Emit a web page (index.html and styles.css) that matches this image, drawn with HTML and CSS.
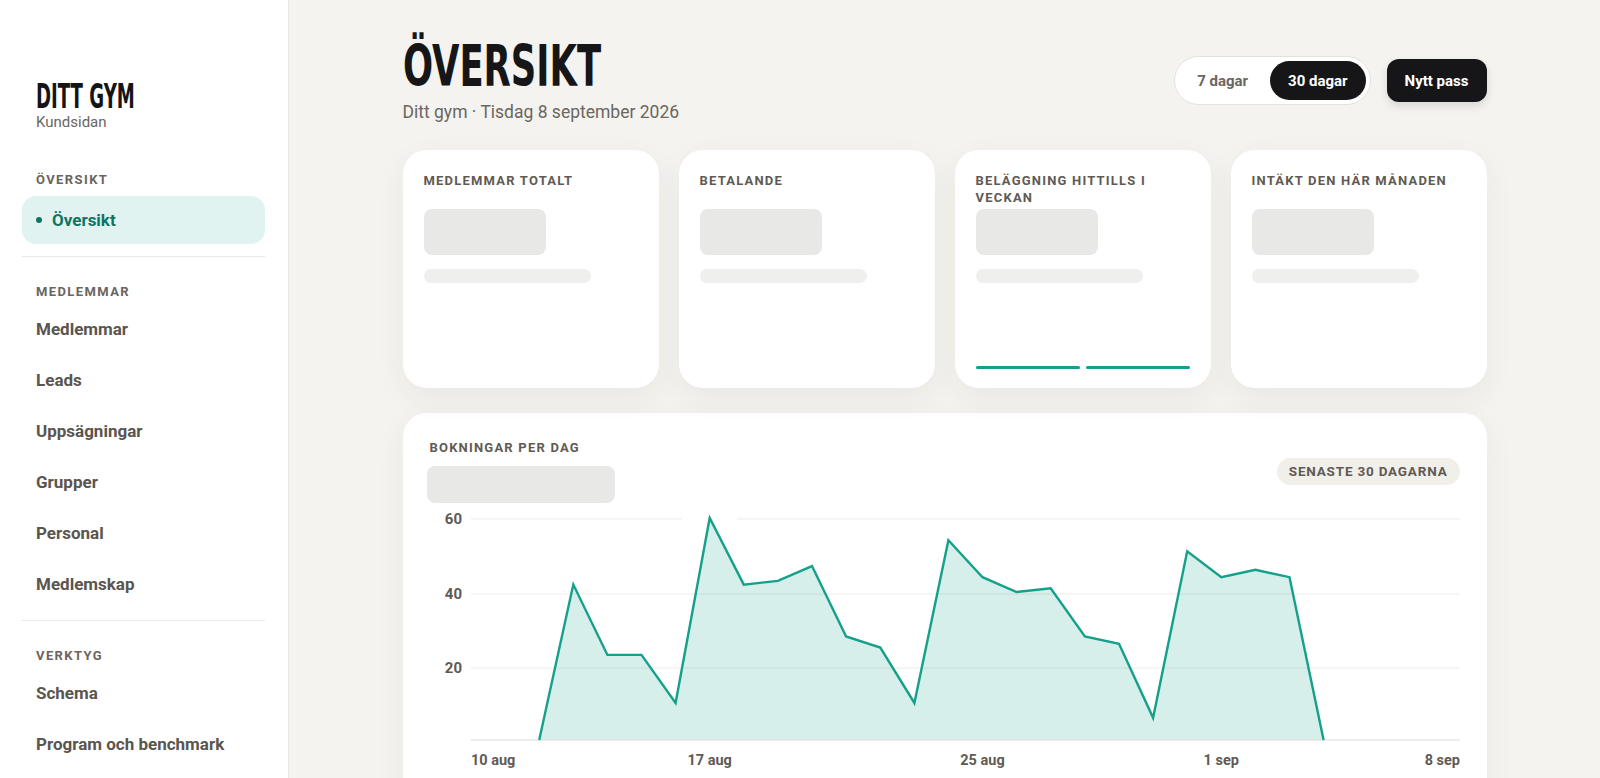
FILE: index.html
```html
<!DOCTYPE html>
<html lang="sv">
<head>
<meta charset="utf-8">
<title>Översikt</title>
<link rel="stylesheet" href="styles.css">
</head>
<body>
<aside class="sidebar">
  <div class="brand">
    <div class="brand-name">DITT GYM</div>
    <div class="brand-sub">Kundsidan</div>
  </div>
  <nav class="nav">
    <div class="nav-section">ÖVERSIKT</div>
    <a class="nav-item active"><span class="dot"></span>Översikt</a>
    <div class="nav-divider"></div>
    <div class="nav-section">MEDLEMMAR</div>
    <a class="nav-item">Medlemmar</a>
    <a class="nav-item">Leads</a>
    <a class="nav-item">Uppsägningar</a>
    <a class="nav-item">Grupper</a>
    <a class="nav-item">Personal</a>
    <a class="nav-item">Medlemskap</a>
    <div class="nav-divider"></div>
    <div class="nav-section">VERKTYG</div>
    <a class="nav-item">Schema</a>
    <a class="nav-item">Program och benchmark</a>
  </nav>
</aside>
<main class="main">
  <div class="container">
    <header class="page-header">
      <div class="title-block">
        <h1 class="title">ÖVERSIKT</h1>
        <div class="subtitle">Ditt gym · Tisdag 8 september 2026</div>
      </div>
      <div class="actions">
        <div class="toggle">
          <button class="toggle-btn">7 dagar</button>
          <button class="toggle-btn on">30 dagar</button>
        </div>
        <button class="primary-btn">Nytt pass</button>
      </div>
    </header>

    <section class="stats">
      <div class="stat-card">
        <div class="stat-label">MEDLEMMAR TOTALT</div>
        <div class="sk-block"></div>
        <div class="sk-line"></div>
      </div>
      <div class="stat-card">
        <div class="stat-label">BETALANDE</div>
        <div class="sk-block"></div>
        <div class="sk-line"></div>
      </div>
      <div class="stat-card">
        <div class="stat-label">BELÄGGNING HITTILLS I VECKAN</div>
        <div class="sk-block"></div>
        <div class="sk-line"></div>
        <div class="bars"><span class="bar"></span><span class="bar"></span></div>
      </div>
      <div class="stat-card">
        <div class="stat-label">INTÄKT DEN HÄR MÅNADEN</div>
        <div class="sk-block"></div>
        <div class="sk-line"></div>
      </div>
    </section>

    <section class="chart-card">
      <div class="chart-head">
        <div>
          <div class="stat-label chart-label">BOKNINGAR PER DAG</div>
          <div class="sk-wide"></div>
        </div>
        <div class="pill">SENASTE 30 DAGARNA</div>
      </div>
      <svg class="chart" width="1030" height="280" viewBox="0 0 1030 280">
        <g class="grid">
          <line x1="41" y1="16" x2="252" y2="16"/>
          <line x1="307" y1="16" x2="1030" y2="16"/>
          <line x1="41" y1="91" x2="1030" y2="91"/>
          <line x1="41" y1="165" x2="1030" y2="165"/>
        </g>
        <g class="ylab">
          <text x="32" y="21">60</text>
          <text x="32" y="96">40</text>
          <text x="32" y="170">20</text>
        </g>
        <path class="area" d="M109.2 237 L143.3 81.6 L177.4 151.9 L211.5 151.9 L245.6 200 L279.7 15 L313.8 81.6 L347.9 77.9 L382 63.1 L416.1 133.4 L450.3 144.5 L484.4 200 L518.4 37.2 L552.5 74.2 L586.6 89 L620.7 85.3 L654.9 133.4 L689 140.8 L723.1 214.8 L757.2 48.3 L791.3 74.2 L825.4 66.8 L859.5 74.2 L893.6 237 Z"/>
        <line class="base" x1="41" y1="237" x2="1030" y2="237"/>
        <path class="line" d="M109.2 237 L143.3 81.6 L177.4 151.9 L211.5 151.9 L245.6 200 L279.7 15 L313.8 81.6 L347.9 77.9 L382 63.1 L416.1 133.4 L450.3 144.5 L484.4 200 L518.4 37.2 L552.5 74.2 L586.6 89 L620.7 85.3 L654.9 133.4 L689 140.8 L723.1 214.8 L757.2 48.3 L791.3 74.2 L825.4 66.8 L859.5 74.2 L893.6 237"/>
        <g class="xlab">
          <text x="41" y="262" text-anchor="start">10 aug</text>
          <text x="279.7" y="262" text-anchor="middle">17 aug</text>
          <text x="552.5" y="262" text-anchor="middle">25 aug</text>
          <text x="791.3" y="262" text-anchor="middle">1 sep</text>
          <text x="1030" y="262" text-anchor="end">8 sep</text>
        </g>
      </svg>
    </section>
  </div>
</main>
</body>
</html>
```
FILE: styles.css
```css
* { box-sizing: border-box; }
html, body { margin: 0; height: 100%; }
body {
  display: flex;
  font-family: Roboto, "Noto Sans", sans-serif;
  color: #5a554f;
  background: #f4f3ef;
  overflow: hidden;
}

/* Sidebar */
.sidebar {
  width: 289px;
  flex: none;
  background: #ffffff;
  border-right: 1px solid #e9e7e2;
  padding: 0 23px 0 22px;
  height: 100vh;
}
.brand { padding: 84px 0 0 14px; }
.brand-name {
  font-family: "DejaVu Sans Condensed", "DejaVu Sans", sans-serif;
  font-weight: 700;
  font-size: 33px;
  line-height: 26px;
  color: #141416;
  display: inline-block;
  transform: scaleX(0.61);
  transform-origin: left center;
  white-space: nowrap;
}
.brand-sub { font-size: 15px; line-height: 20px; color: #6b665f; margin-top: 0; }

.nav { margin-top: 39px; }
.nav-section {
  font-size: 13px;
  font-weight: 700;
  letter-spacing: 1.4px;
  color: #6b655e;
  padding-left: 14px;
  line-height: 18px;
  margin-bottom: 7px;
}
.nav-divider + .nav-section { margin-bottom: 4px; }
.nav-item {
  display: flex;
  align-items: center;
  height: 48px;
  padding-left: 14px;
  font-size: 17px;
  font-weight: 700;
  color: #5a554f;
  margin-bottom: 3px;
  border-radius: 14px;
}
.nav-item.active { background: #e1f3f0; color: #0e7564; }
.dot { width: 6px; height: 6px; border-radius: 50%; background: #0e7564; margin-right: 10px; }
.nav-divider { height: 1px; background: #ebe9e5; margin: 12px 0 26px; }

/* Main */
.main { flex: 1; height: 100vh; overflow: hidden; }
.container { width: 1084px; margin: 0 auto; padding-top: 38px; }

.page-header { display: flex; justify-content: space-between; align-items: flex-start; }
.title {
  margin: 0;
  font-family: "DejaVu Sans Condensed", "DejaVu Sans", sans-serif;
  font-weight: 700;
  font-size: 57px;
  line-height: 57px;
  color: #161618;
  display: inline-block;
  transform: scaleX(0.69);
  transform-origin: left center;
  white-space: nowrap;
}
.subtitle { font-size: 17.5px; line-height: 24px; color: #6b665f; margin-top: 5px; }

.actions { display: flex; align-items: center; gap: 16px; margin-top: 18px; }
.toggle {
  display: flex;
  gap: 4px;
  padding: 4px;
  background: #fff;
  border: 1px solid #e4e1dc;
  border-radius: 25px;
}
.toggle-btn, .primary-btn {
  font-family: inherit;
  font-size: 15px;
  font-weight: 700;
  border: none;
  cursor: pointer;
}
.toggle-btn {
  height: 39px;
  padding: 0 18px;
  border-radius: 20px;
  background: transparent;
  color: #6b665f;
}
.toggle-btn.on { background: #161618; color: #fff; }
.primary-btn {
  height: 43px;
  padding: 0 18px;
  border-radius: 12px;
  background: #161618;
  color: #fff;
  box-shadow: 0 4px 10px rgba(0,0,0,0.12);
}

/* Stat cards */
.stats {
  display: grid;
  grid-template-columns: repeat(4, 1fr);
  gap: 20px;
  margin-top: 26px;
}
.stat-card {
  height: 238px;
  background: #fff;
  border-radius: 24px;
  padding: 22px 21px 19px;
  display: flex;
  flex-direction: column;
  box-shadow: 0 10px 30px rgba(60,50,40,0.06);
}
.stat-label {
  font-size: 13px;
  font-weight: 700;
  letter-spacing: 1.2px;
  line-height: 17px;
  color: #5f5a54;
  min-height: 34px;
}
.sk-block { width: 122px; height: 46px; border-radius: 8px; background: #e8e8e6; margin-top: 3px; }
.sk-line { width: 167px; height: 14px; border-radius: 7px; background: #efefed; margin-top: 14px; }
.bars { margin-top: auto; display: flex; gap: 6px; }
.bar { flex: 1; height: 3px; border-radius: 2px; background: #14a08b; }

/* Chart */
.chart-card {
  margin-top: 25px;
  background: #fff;
  border-radius: 24px;
  padding: 26px 27px 30px 24px;
  box-shadow: 0 10px 30px rgba(60,50,40,0.06);
}
.chart-head { display: flex; justify-content: space-between; align-items: center; }
.chart-label { min-height: 0; padding-left: 3px; }
.sk-wide { width: 188px; height: 37px; border-radius: 8px; background: #e8e8e6; margin-top: 10px; }
.pill {
  height: 27px;
  padding: 0 12px;
  display: flex;
  align-items: center;
  border-radius: 14px;
  background: #f1efea;
  font-size: 13.5px;
  font-weight: 700;
  letter-spacing: 0.8px;
  color: #5f5a54;
}
.chart { display: block; margin-left: 3px; }
.grid line { stroke: #ecebe8; stroke-width: 1; }
.base { stroke: #dddbd7; stroke-width: 1; }
.area { fill: #14a08b; fill-opacity: 0.17; }
.line { fill: none; stroke: #14a08b; stroke-width: 2.4; stroke-linejoin: miter; }
.ylab text { font-family: Roboto, sans-serif; font-size: 15px; font-weight: 700; fill: #5f5a54; text-anchor: end; }
.xlab text { font-family: Roboto, sans-serif; font-size: 14.5px; font-weight: 700; fill: #5f5a54; }
```
